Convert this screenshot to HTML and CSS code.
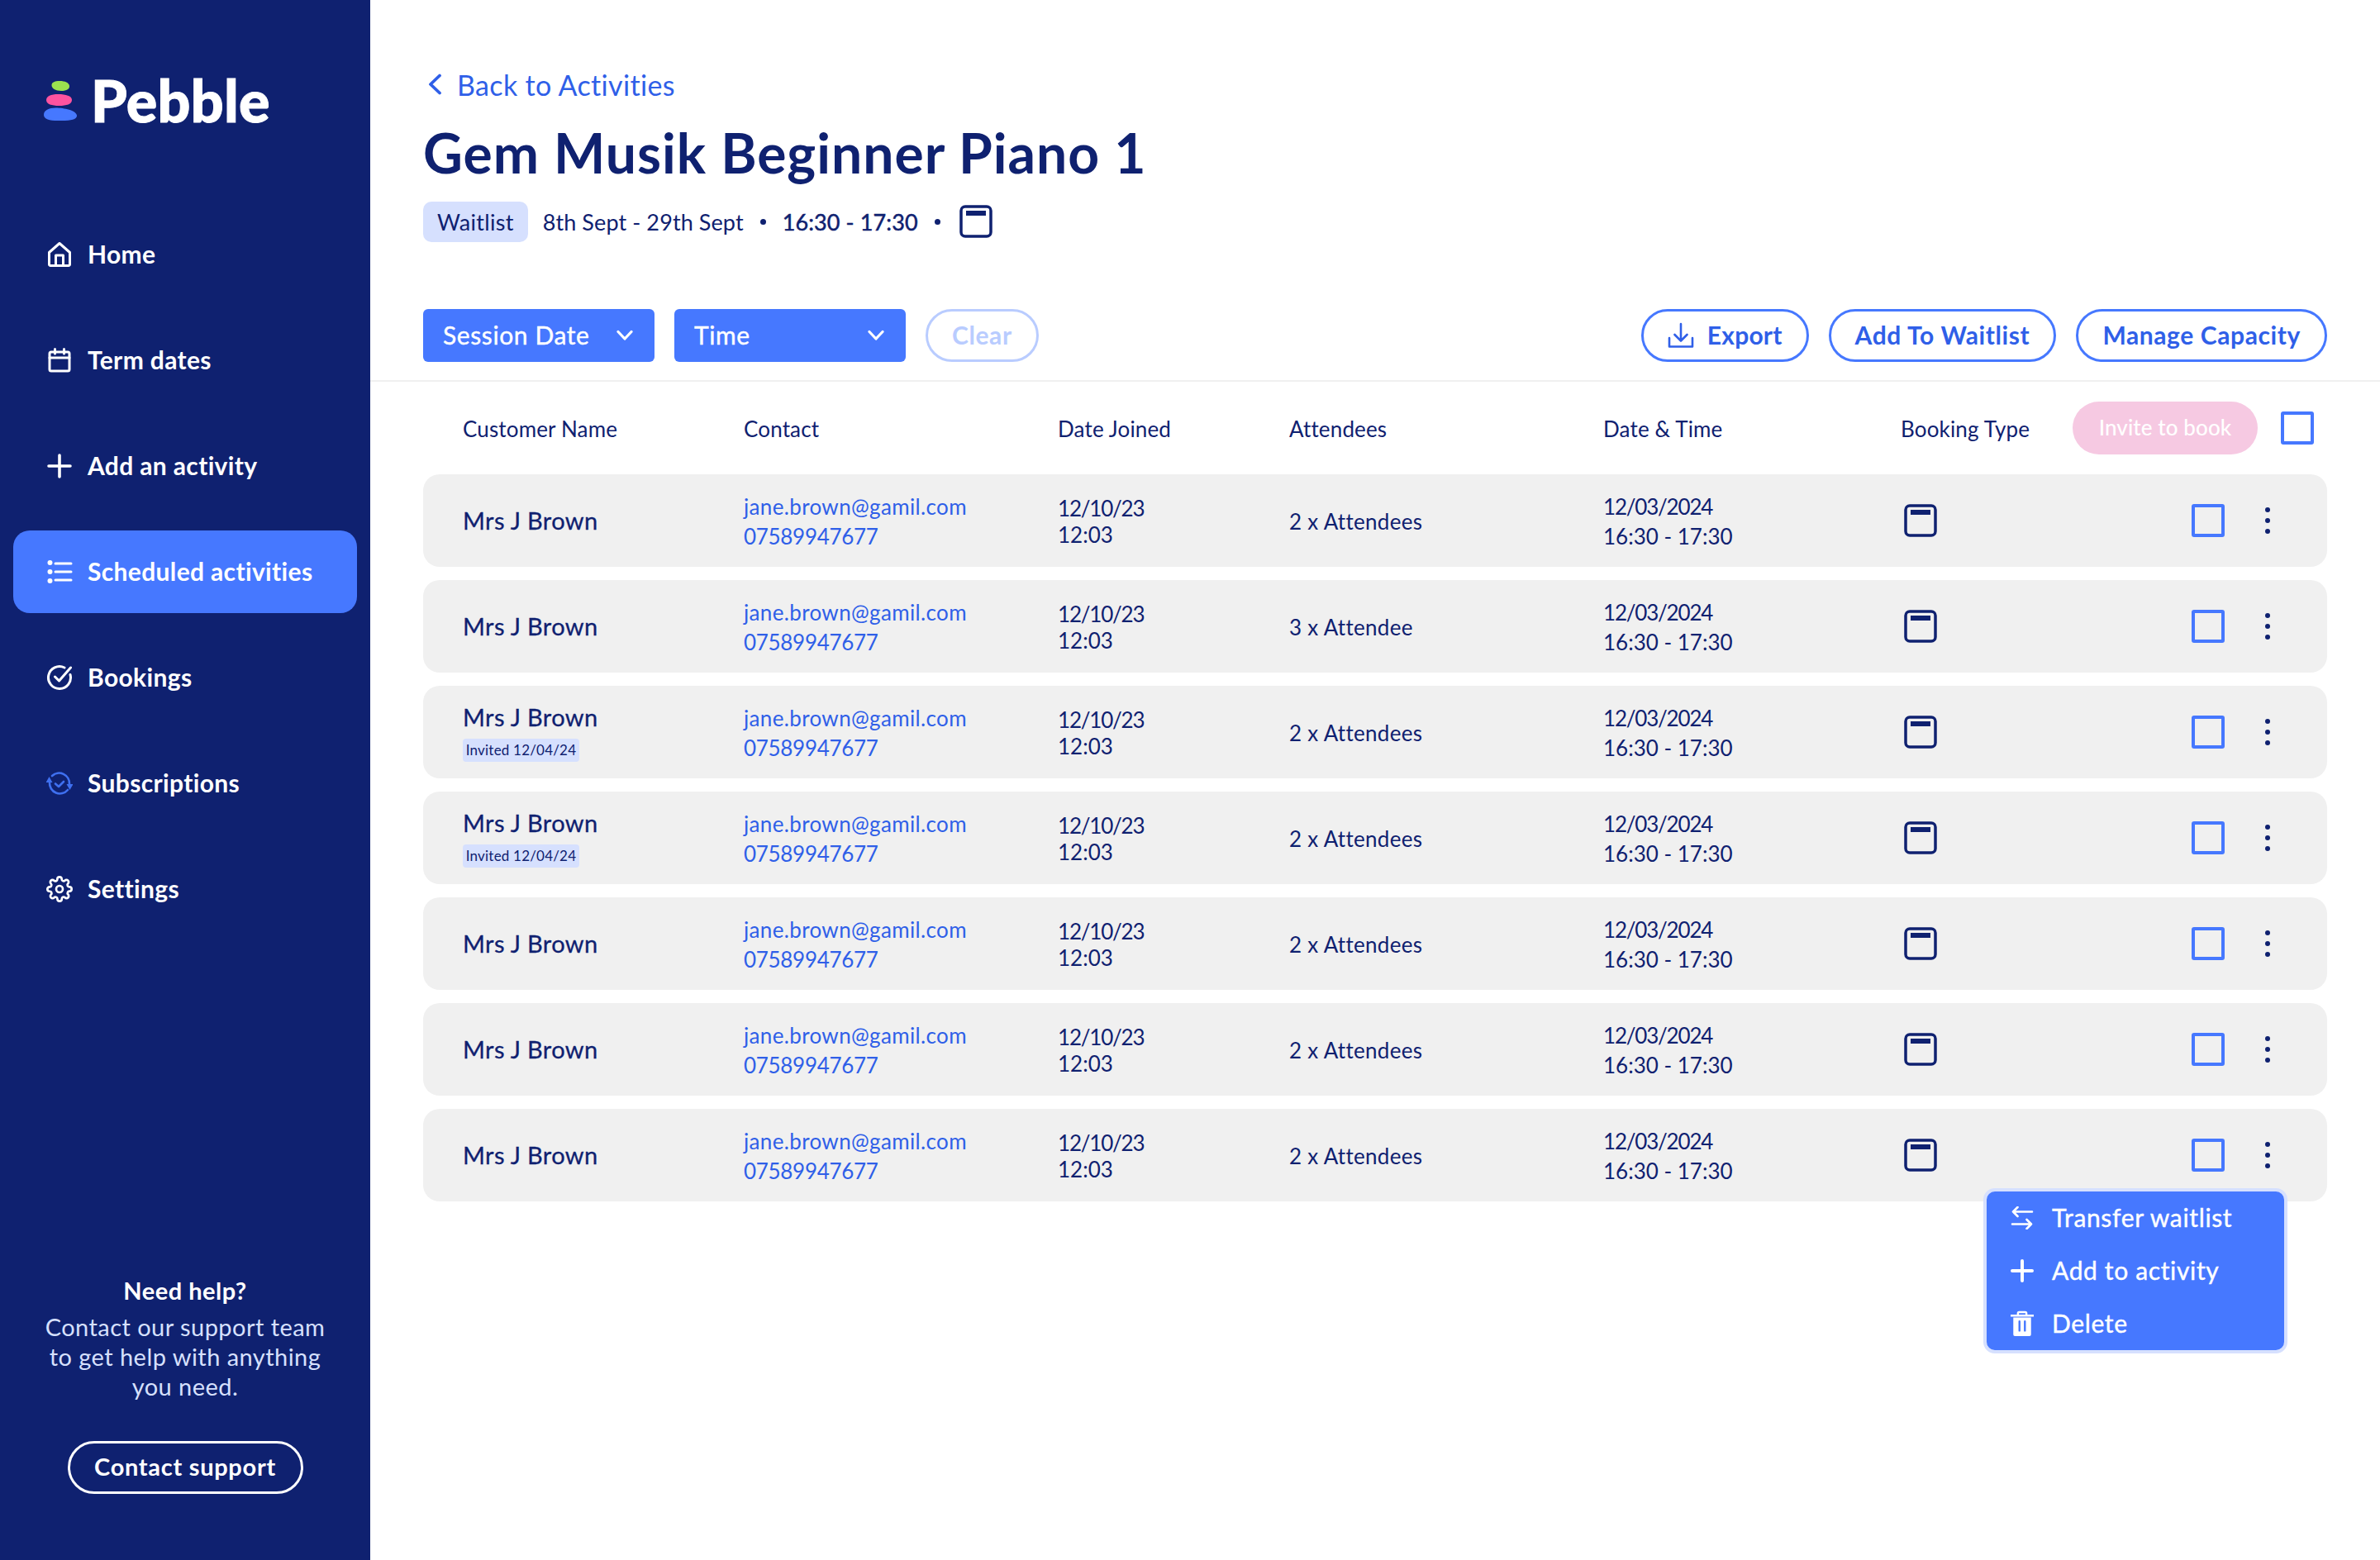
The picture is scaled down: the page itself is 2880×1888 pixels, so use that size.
FILE: index.html
```html
<!DOCTYPE html>
<html lang="en">
<head>
    <meta charset="UTF-8">
    <title>Pebble - Gem Musik Beginner Piano 1</title>
    <link rel="stylesheet" href="styles.css">
</head>
<body>
    <svg class="sprite" xmlns="http://www.w3.org/2000/svg">
        <symbol id="ico-type" viewBox="0 0 40 40">
            <rect x="2" y="2" width="36" height="36" rx="5" fill="none" stroke="currentColor" stroke-width="3.5"/>
            <rect x="8" y="7" width="24" height="6" fill="currentColor"/>
        </symbol>
        <symbol id="ico-plus" viewBox="0 0 28 28">
            <path d="M14 2v24M2 14h24" fill="none" stroke="currentColor" stroke-width="4" stroke-linecap="round"/>
        </symbol>
        <symbol id="ico-chev" viewBox="0 0 20 14">
            <path d="M2 2.500l8 8.500 8-8.500" fill="none" stroke="currentColor" stroke-width="3.2" stroke-linecap="round" stroke-linejoin="round"/>
        </symbol>
    </svg>

    <div class="app">
        <aside class="sidebar">
            <div class="logo">
                <svg class="logo-mark" viewBox="0 0 40 50">
                    <path d="M9.500 6c0-3 3-5 10-5 6 0 11 2 11.500 6 .3 3.500-3 6-10 6-7 0-11.500-3-11.500-7z" fill="#9be24f"/>
                    <path d="M3 24c0-4.500 5.500-7 14.500-7 9 0 16.500 2 16.500 7s-6.500 7-15.500 7c-9 0-15.500-2-15.500-7z" fill="#ff539f"/>
                    <path d="M0 42c0-5.500 6-8.500 14.500-8.500 10 0 24.500 3 25.500 9 .5 4.500-5.500 6.500-18.500 6.500C8.500 49.500 0 48 0 42z" fill="#4678ff"/>
                </svg>
                <span class="logo-text">Pebble</span>
            </div>

            <nav class="nav">
                <a class="nav-item">
                    <svg class="nav-icon" viewBox="0 0 32 32"><path d="M3.500 13.500L16 2.500l12.500 11V28a1.500 1.500 0 0 1-1.500 1.500H5A1.500 1.500 0 0 1 3.500 28zM11.500 29.500V17h9v12.500"/></svg>
                    <span>Home</span>
                </a>
                <a class="nav-item">
                    <svg class="nav-icon" viewBox="0 0 32 32"><rect x="4" y="6" width="24" height="23" rx="2"/><path d="M4 13h24M10.500 2.500V8M21.500 2.500V8"/></svg>
                    <span>Term dates</span>
                </a>
                <a class="nav-item">
                    <svg class="nav-icon bold" viewBox="0 0 32 32"><path d="M16 3v26M3 16h26"/></svg>
                    <span>Add an activity</span>
                </a>
                <a class="nav-item active">
                    <svg class="nav-icon" viewBox="0 0 32 32"><path d="M11 6h19M11 16h19M11 26h19"/><circle class="dot" cx="4.500" cy="5" r="3"/><circle class="dot" cx="4.500" cy="16" r="3"/><circle class="dot" cx="4.500" cy="27" r="3"/></svg>
                    <span>Scheduled activities</span>
                </a>
                <a class="nav-item">
                    <svg class="nav-icon" viewBox="0 0 32 32"><path d="M29 12.500A13.500 13.500 0 1 1 22 4M10.500 15l5 5L29.500 4"/></svg>
                    <span>Bookings</span>
                </a>
                <a class="nav-item">
                    <svg class="nav-icon subs" viewBox="0 0 32 32"><path d="M4 15A12.500 12.500 0 0 0 26 24M28 17A12.500 12.500 0 0 0 7 7M11 16.500l4 3.500 6-6"/><path class="arrow" d="M3.500 8l4 7h-8zM28.500 24l-4-7h8z"/></svg>
                    <span>Subscriptions</span>
                </a>
                <a class="nav-item">
                    <svg class="nav-icon" viewBox="0 0 24 24"><circle cx="12" cy="12" r="3"/><path class="thin" d="M19.400 15a1.650 1.650 0 0 0 .33 1.820l.06.06a2 2 0 0 1 0 2.830 2 2 0 0 1-2.830 0l-.06-.06a1.650 1.650 0 0 0-1.820-.33 1.650 1.650 0 0 0-1 1.510V21a2 2 0 0 1-2 2 2 2 0 0 1-2-2v-.09A1.650 1.650 0 0 0 9 19.400a1.650 1.650 0 0 0-1.820.33l-.06.06a2 2 0 0 1-2.830 0 2 2 0 0 1 0-2.830l.06-.06a1.650 1.650 0 0 0 .33-1.820 1.650 1.650 0 0 0-1.510-1H3a2 2 0 0 1-2-2 2 2 0 0 1 2-2h.09A1.650 1.650 0 0 0 4.600 9a1.650 1.650 0 0 0-.33-1.820l-.06-.06a2 2 0 0 1 0-2.830 2 2 0 0 1 2.830 0l.06.06a1.650 1.650 0 0 0 1.820.33H9a1.650 1.650 0 0 0 1-1.510V3a2 2 0 0 1 2-2 2 2 0 0 1 2 2v.09a1.650 1.650 0 0 0 1 1.510 1.650 1.650 0 0 0 1.820-.33l.06-.06a2 2 0 0 1 2.830 0 2 2 0 0 1 0 2.830l-.06.06a1.650 1.650 0 0 0-.33 1.820V9a1.650 1.650 0 0 0 1.510 1H21a2 2 0 0 1 2 2 2 2 0 0 1-2 2h-.09a1.650 1.650 0 0 0-1.510 1z"/></svg>
                    <span>Settings</span>
                </a>
            </nav>

            <div class="help">
                <div class="help-title">Need help?</div>
                <p class="help-text">Contact our support team to get help with anything you need.</p>
                <a class="help-btn">Contact support</a>
            </div>
        </aside>

        <main class="main">
            <header class="head">
                <a class="back">
                    <svg class="back-icon" viewBox="0 0 18 26"><path d="M15 2.500L4 13l11 10.500"/></svg>
                    Back to Activities
                </a>
                <h1 class="title">Gem Musik Beginner Piano 1</h1>
                <div class="meta">
                    <span class="tag">Waitlist</span>
                    <span class="meta-date">8th Sept - 29th Sept</span>
                    <span class="meta-dot"></span>
                    <span class="meta-time">16:30 - 17:30</span>
                    <span class="meta-dot"></span>
                    <svg class="type-icon"><use href="#ico-type"/></svg>
                </div>
                <div class="toolbar">
                    <button class="select select-date">Session Date <svg class="select-chev"><use href="#ico-chev"/></svg></button>
                    <button class="select select-time">Time <svg class="select-chev"><use href="#ico-chev"/></svg></button>
                    <button class="pill pill-clear">Clear</button>
                    <button class="pill pill-export">
                        <svg class="export-icon" viewBox="0 0 32 32"><path d="M16 2v20M8.500 15l7.500 7.500 7.500-7.500M2 19v10.500h28V19"/></svg>
                        Export
                    </button>
                    <button class="pill">Add To Waitlist</button>
                    <button class="pill">Manage Capacity</button>
                </div>
            </header>

            <section class="table">
                <div class="grid table-head">
                    <div>Customer Name</div>
                    <div>Contact</div>
                    <div>Date Joined</div>
                    <div>Attendees</div>
                    <div>Date &amp; Time</div>
                    <div>Booking Type</div>
                    <div class="head-actions">
                        <button class="invite">Invite to book</button>
                        <span class="check"></span>
                    </div>
                </div>

                <div class="grid row">
                    <div class="name">Mrs J Brown</div>
                    <div class="contact">jane.brown@gamil.com<br><span class="phone">07589947677</span></div>
                    <div class="joined"><span class="date">12/10/23</span><br>12:03</div>
                    <div class="people">2 x Attendees</div>
                    <div class="when"><span class="date">12/03/2024</span><br>16:30 - 17:30</div>
                    <div class="type-cell"><svg class="type-icon"><use href="#ico-type"/></svg></div>
                    <div class="row-actions"><span class="check"></span><span class="kebab"><i></i><i></i><i></i></span></div>
                </div>
                <div class="grid row">
                    <div class="name">Mrs J Brown</div>
                    <div class="contact">jane.brown@gamil.com<br><span class="phone">07589947677</span></div>
                    <div class="joined"><span class="date">12/10/23</span><br>12:03</div>
                    <div class="people">3 x Attendee</div>
                    <div class="when"><span class="date">12/03/2024</span><br>16:30 - 17:30</div>
                    <div class="type-cell"><svg class="type-icon"><use href="#ico-type"/></svg></div>
                    <div class="row-actions"><span class="check"></span><span class="kebab"><i></i><i></i><i></i></span></div>
                </div>
                <div class="grid row">
                    <div class="name">Mrs J Brown<span class="invited">Invited 12/04/24</span></div>
                    <div class="contact">jane.brown@gamil.com<br><span class="phone">07589947677</span></div>
                    <div class="joined"><span class="date">12/10/23</span><br>12:03</div>
                    <div class="people">2 x Attendees</div>
                    <div class="when"><span class="date">12/03/2024</span><br>16:30 - 17:30</div>
                    <div class="type-cell"><svg class="type-icon"><use href="#ico-type"/></svg></div>
                    <div class="row-actions"><span class="check"></span><span class="kebab"><i></i><i></i><i></i></span></div>
                </div>
                <div class="grid row">
                    <div class="name">Mrs J Brown<span class="invited">Invited 12/04/24</span></div>
                    <div class="contact">jane.brown@gamil.com<br><span class="phone">07589947677</span></div>
                    <div class="joined"><span class="date">12/10/23</span><br>12:03</div>
                    <div class="people">2 x Attendees</div>
                    <div class="when"><span class="date">12/03/2024</span><br>16:30 - 17:30</div>
                    <div class="type-cell"><svg class="type-icon"><use href="#ico-type"/></svg></div>
                    <div class="row-actions"><span class="check"></span><span class="kebab"><i></i><i></i><i></i></span></div>
                </div>
                <div class="grid row">
                    <div class="name">Mrs J Brown</div>
                    <div class="contact">jane.brown@gamil.com<br><span class="phone">07589947677</span></div>
                    <div class="joined"><span class="date">12/10/23</span><br>12:03</div>
                    <div class="people">2 x Attendees</div>
                    <div class="when"><span class="date">12/03/2024</span><br>16:30 - 17:30</div>
                    <div class="type-cell"><svg class="type-icon"><use href="#ico-type"/></svg></div>
                    <div class="row-actions"><span class="check"></span><span class="kebab"><i></i><i></i><i></i></span></div>
                </div>
                <div class="grid row">
                    <div class="name">Mrs J Brown</div>
                    <div class="contact">jane.brown@gamil.com<br><span class="phone">07589947677</span></div>
                    <div class="joined"><span class="date">12/10/23</span><br>12:03</div>
                    <div class="people">2 x Attendees</div>
                    <div class="when"><span class="date">12/03/2024</span><br>16:30 - 17:30</div>
                    <div class="type-cell"><svg class="type-icon"><use href="#ico-type"/></svg></div>
                    <div class="row-actions"><span class="check"></span><span class="kebab"><i></i><i></i><i></i></span></div>
                </div>
                <div class="grid row">
                    <div class="name">Mrs J Brown</div>
                    <div class="contact">jane.brown@gamil.com<br><span class="phone">07589947677</span></div>
                    <div class="joined"><span class="date">12/10/23</span><br>12:03</div>
                    <div class="people">2 x Attendees</div>
                    <div class="when"><span class="date">12/03/2024</span><br>16:30 - 17:30</div>
                    <div class="type-cell"><svg class="type-icon"><use href="#ico-type"/></svg></div>
                    <div class="row-actions"><span class="check"></span><span class="kebab"><i></i><i></i><i></i></span></div>

                    <!-- open row menu -->
                    <ul class="menu">
                        <li>
                            <svg class="menu-icon" viewBox="0 0 28 28"><path d="M26 6.500H3M8.500 1L3 6.500 8.500 12M2 21.500h23M19.500 16l5.500 5.500-5.500 5.500"/></svg>
                            Transfer waitlist
                        </li>
                        <li>
                            <svg class="menu-icon"><use href="#ico-plus"/></svg>
                            Add to activity
                        </li>
                        <li>
                            <svg class="menu-icon trash" viewBox="0 0 30 32"><path class="fill" d="M3.500 8h23v22a2 2 0 0 1-2 2h-19a2 2 0 0 1-2-2z"/><path d="M0 5.500h30M9.500 5V2.500a1.500 1.500 0 0 1 1.500-1.500h8a1.500 1.500 0 0 1 1.500 1.500V5"/><path class="slot" d="M11.500 13v12M18.500 13v12"/></svg>
                            Delete
                        </li>
                    </ul>
                </div>
            </section>
        </main>
    </div>
</body>
</html>
```

FILE: styles.css
```css
* {
    box-sizing: border-box;
}
html, body {
    margin: 0;
    height: 100%;
}
body {
    font-family: "Lato", "Open Sans", sans-serif;
    color: #0f2170;
    background: #fff;
}
button {
    font-family: inherit;
}
.sprite {
    position: absolute;
    width: 0;
    height: 0;
}
.app {
    display: flex;
    height: 1888px;
}

/* sidebar */
.sidebar {
    width: 448px;
    flex: none;
    display: flex;
    flex-direction: column;
    background: #0f2170;
    color: #fff;
}
.logo {
    display: flex;
    align-items: center;
    height: 50px;
    margin: 97px 0 0 53px;
}
.logo-mark {
    width: 40px;
    height: 50px;
}
.logo-text {
    margin: -2px 0 0 17px;
    font-size: 70px;
    font-weight: 900;
    letter-spacing: 0.3px;
    line-height: 50px;
    -webkit-text-stroke: 1px #fff;
}
.nav {
    display: flex;
    flex-direction: column;
    gap: 28px;
    margin: 111px 16px 0;
}
.nav-item {
    display: flex;
    align-items: center;
    gap: 18px;
    height: 100px;
    padding-left: 40px;
    border-radius: 20px;
    font-size: 30px;
    font-weight: 700;
    letter-spacing: 0.35px;
}
.nav-item span {
    margin-top: -2px;
}
.nav-item.active {
    background: #4678ff;
}
.nav-icon {
    width: 32px;
    height: 32px;
    flex: none;
    fill: none;
    stroke: #fff;
    stroke-width: 3;
    stroke-linecap: round;
    stroke-linejoin: round;
}
.nav-icon.bold {
    stroke-width: 3.6;
}
.nav-icon .dot {
    fill: #fff;
    stroke: none;
}
.nav-icon .thin {
    stroke-width: 2;
}
.nav-icon circle {
    stroke-width: 2;
}
.nav-icon.subs {
    stroke: #3f70f0;
    stroke-width: 2.6;
}
.nav-icon.subs .arrow {
    fill: #3f70f0;
    stroke: none;
}
.help {
    margin-top: auto;
    padding: 0 40px 80px;
    text-align: center;
}
.help-title {
    margin-top: -2px;
    font-size: 29px;
    font-weight: 700;
    line-height: 36px;
    letter-spacing: 0.5px;
}
.help-text {
    margin: 8px 0 48px;
    font-size: 29px;
    line-height: 36px;
    letter-spacing: 0.45px;
    color: #d6e0fe;
}
.help-btn {
    display: inline-flex;
    align-items: center;
    justify-content: center;
    width: 285px;
    height: 64px;
    padding-bottom: 3px;
    border: 3px solid #fff;
    border-radius: 32px;
    font-size: 29px;
    font-weight: 700;
    letter-spacing: 0.7px;
}

/* page head */
.main {
    flex: 1;
    min-width: 0;
}
.head {
    padding: 84px 64px 22px;
    border-bottom: 2px solid #f0f0f0;
}
.back {
    display: flex;
    align-items: center;
    gap: 18px;
    height: 38px;
    padding: 0 0 2px 5px;
    font-size: 34px;
    letter-spacing: 0.35px;
    color: #2f5fe8;
}
.back-icon {
    width: 18px;
    height: 26px;
    fill: none;
    stroke: #2f5fe8;
    stroke-width: 3.8;
    stroke-linecap: round;
    stroke-linejoin: round;
}
.title {
    margin: 23px 0 1px;
    font-size: 66px;
    font-weight: 700;
    line-height: 80px;
    letter-spacing: 1px;
}
.meta {
    display: flex;
    align-items: center;
    gap: 20px;
    height: 50px;
    margin-top: 18px;
    font-size: 27px;
    letter-spacing: 0.3px;
}
.tag {
    display: flex;
    align-items: center;
    height: 49px;
    margin: 1px -2px 0 0;
    padding: 0 17px 1px;
    border-radius: 10px;
    background: #d6e0fe;
}
.meta-date {
    letter-spacing: 0.1px;
}
.meta-time {
    letter-spacing: 0.1px;
    -webkit-text-stroke: 0.5px #0f2170;
}
.meta-dot {
    width: 7px;
    height: 7px;
    border-radius: 50%;
    background: #0f2170;
}
.type-icon {
    width: 40px;
    height: 40px;
    flex: none;
    color: #0f2170;
}
.meta .type-icon {
    margin-left: 3px;
}
.toolbar {
    display: flex;
    align-items: center;
    gap: 24px;
    margin-top: 81px;
}
.select {
    display: flex;
    align-items: center;
    justify-content: space-between;
    width: 280px;
    height: 64px;
    padding: 0 26px 3px 24px;
    border: none;
    border-radius: 6px;
    background: #4678ff;
    color: #fff;
    font-size: 30px;
    font-weight: 400;
    letter-spacing: 0.6px;
    -webkit-text-stroke: 0.4px #fff;
}
.select-chev {
    width: 20px;
    height: 14px;
    margin-top: 3px;
    color: #fff;
}
.pill {
    display: flex;
    align-items: center;
    height: 64px;
    padding: 0 29px 3px;
    border: 3px solid #4678ff;
    border-radius: 32px;
    background: #fff;
    color: #2f5fe8;
    font-size: 30px;
    font-weight: 700;
    letter-spacing: 0.6px;
}
.pill-clear {
    border-color: #b9ccff;
    color: #b9ccff;
}
.pill-export {
    margin-left: auto;
    gap: 16px;
    letter-spacing: 0.2px;
}
.export-icon {
    width: 32px;
    height: 32px;
    margin-top: 3px;
    fill: none;
    stroke: #2f5fe8;
    stroke-width: 2.6;
    stroke-linecap: round;
    stroke-linejoin: round;
}

/* table */
.table {
    display: flex;
    flex-direction: column;
    gap: 16px;
    padding: 24px 64px 0;
}
.grid {
    display: grid;
    grid-template-columns: 340px 380px 280px 380px 360px 200px 1fr;
    align-items: center;
    padding-left: 48px;
    font-size: 26px;
    letter-spacing: 0.35px;
}
.table-head {
    height: 64px;
    margin-bottom: 8px;
    letter-spacing: 0.15px;
}
.table-head > div:not(.head-actions) {
    padding-top: 2px;
}
.head-actions {
    display: flex;
    align-items: center;
    justify-content: flex-end;
    gap: 28px;
    padding-right: 16px;
}
.invite {
    height: 64px;
    width: 224px;
    padding: 0 0 3px;
    border: none;
    border-radius: 32px;
    background: #f6c9e2;
    color: #fff;
    font-size: 26px;
    font-weight: 500;
    letter-spacing: 0.1px;
}
.check {
    width: 40px;
    height: 40px;
    border: 4px solid #4678ff;
    border-radius: 3px;
}
.row {
    position: relative;
    height: 112px;
    border-radius: 20px;
    background: #f0f0f0;
}
.name {
    font-size: 29px;
    font-weight: 400;
    line-height: 36px;
    letter-spacing: 0.35px;
    -webkit-text-stroke: 0.3px #0f2170;
}
.invited {
    display: block;
    width: 141px;
    height: 28px;
    margin-top: 8px;
    border-radius: 4px;
    background: #d6e0fe;
    font-size: 17px;
    font-weight: 400;
    line-height: 28px;
    letter-spacing: 0.2px;
    text-align: center;
    -webkit-text-stroke: 0;
}
.contact {
    padding-top: 2px;
    line-height: 36px;
    color: #2f5fe8;
}
.phone {
    letter-spacing: -0.3px;
}
.date {
    letter-spacing: -1.2px;
}
.joined {
    padding-top: 2px;
    line-height: 32px;
    letter-spacing: 0;
}
.people {
    padding-top: 2px;
    letter-spacing: 0.3px;
}
.when {
    padding-top: 2px;
    line-height: 36px;
    letter-spacing: 0;
}
.type-cell {
    display: flex;
    padding-left: 4px;
}
.row-actions {
    display: flex;
    align-items: center;
    justify-content: flex-end;
    gap: 40px;
    padding-right: 60px;
}
.kebab {
    display: flex;
    flex-direction: column;
    align-items: center;
    gap: 6.5px;
    width: 24px;
}
.kebab i {
    width: 6.500px;
    height: 6.500px;
    border-radius: 50%;
    background: #0f2170;
}

/* row menu */
.menu {
    position: absolute;
    top: 96px;
    right: 48px;
    z-index: 2;
    width: 368px;
    height: 200px;
    margin: 0;
    padding: 0;
    list-style: none;
    border: 4px solid #d6e0fe;
    border-radius: 14px;
    background: #4678ff;
    color: #fff;
    font-size: 30px;
    font-weight: 400;
    letter-spacing: 0.65px;
    -webkit-text-stroke: 0.4px #fff;
}
.menu li {
    display: flex;
    align-items: center;
    gap: 22px;
    height: 64px;
    padding: 0 0 3px 29px;
}
.menu-icon {
    width: 28px;
    height: 28px;
    flex: none;
    margin-top: 3px;
    color: #fff;
    fill: none;
    stroke: #fff;
    stroke-width: 2.6;
    stroke-linecap: round;
    stroke-linejoin: round;
}
.menu-icon.trash {
    height: 32px;
}
.menu-icon .fill {
    fill: #fff;
    stroke: none;
}
.menu-icon .slot {
    stroke: #4678ff;
}
```
